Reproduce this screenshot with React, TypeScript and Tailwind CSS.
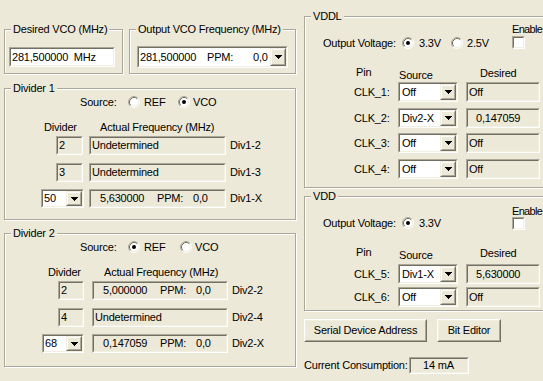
import React from "react";

type P = { className?: string; inner?: string; children?: React.ReactNode };

function Sunken({ className = "", inner = "", children }: P) {
  return (
    <div className={`shrink-0 border border-t-[#ACA899] border-l-[#ACA899] border-b-white border-r-white ${className}`}>
      <div className={`flex h-full w-full items-center overflow-hidden whitespace-pre border border-t-[#716F64] border-l-[#716F64] border-b-[#F1EFE2] border-r-[#F1EFE2] ${inner}`}>
        {children}
      </div>
    </div>
  );
}

function DropBtn() {
  return (
    <div className="h-full w-[16px] shrink-0 border border-t-[#F1EFE2] border-l-[#F1EFE2] border-b-[#716F64] border-r-[#716F64]">
      <div className="flex h-full w-full items-center justify-center border border-t-white border-l-white border-b-[#ACA899] border-r-[#ACA899] bg-[#ECE9D8]">
        <svg width="7" height="4" viewBox="0 0 7 4" shapeRendering="crispEdges">
          <path d="M0 0h7v1h-1v1h-1v1h-1v1h-1v-1h-1v-1h-1v-1h-1z" fill="#000" />
        </svg>
      </div>
    </div>
  );
}

function Combo({ className = "", inner = "pl-[2px]", children }: P) {
  return (
    <Sunken className={className} inner="bg-white">
      <div className={`min-w-0 flex-1 whitespace-pre ${inner}`}>{children}</div>
      <DropBtn />
    </Sunken>
  );
}

function Radio({ on }: { on?: boolean }) {
  return (
    <svg width="12" height="12" viewBox="0 0 12 12" className="shrink-0">
      <circle cx="6" cy="6" r="4.5" fill="#fff" />
      <path d="M2.11 9.89A5.5 5.5 0 0 1 9.89 2.11" fill="none" stroke="#ACA899" />
      <path d="M9.89 2.11A5.5 5.5 0 0 1 2.11 9.89" fill="none" stroke="#fff" />
      <path d="M2.82 9.18A4.5 4.5 0 0 1 9.18 2.82" fill="none" stroke="#716F64" />
      <path d="M9.18 2.82A4.5 4.5 0 0 1 2.82 9.18" fill="none" stroke="#F1EFE2" />
      {on && <circle cx="6" cy="6" r="2" fill="#000" />}
    </svg>
  );
}

function Button({ className = "", children }: P) {
  return (
    <div className={`h-[23px] shrink-0 border border-t-white border-l-white border-b-[#716F64] border-r-[#716F64] ${className}`}>
      <div className="flex h-full w-full items-center justify-center border border-t-[#F1EFE2] border-l-[#F1EFE2] border-b-[#ACA899] border-r-[#ACA899] bg-[#ECE9D8]">
        {children}
      </div>
    </div>
  );
}

function Group({ title, className = "", children }: { title: string; className?: string; children?: React.ReactNode }) {
  return (
    <fieldset className={`shrink-0 border border-[#ACA899] shadow-[inset_1px_1px_0_#fff,1px_1px_0_#fff] ${className}`}>
      <legend className="ml-[6px] bg-[#ECE9D8] px-[2px] leading-[13px]">{title}</legend>
      {children}
    </fieldset>
  );
}

function Freq({ value }: { value: string }) {
  return (
    <>
      <span className="ml-[8px] w-[57px] shrink-0">{value}</span>
      <span className="w-[36px] shrink-0">PPM:</span>
      <span>0,0</span>
    </>
  );
}

type Row = { small?: string; combo?: string; big: React.ReactNode; label: string };

function DividerGroup({
  title,
  refOn,
  className,
  rows,
  d2,
}: {
  title: string;
  refOn: boolean;
  className: string;
  rows: Row[];
  d2?: boolean;
}) {
  const mts = ["mt-[2px]", "mt-[8px]", "mt-[7px]"];
  return (
    <Group title={title} className={className}>
      <div className="flex h-[14px] items-center pl-[75px]">
        <span className="w-[48px]">Source:</span>
        <Radio on={refOn} />
        <span className={`ml-[4px] ${d2 ? "w-[36px]" : "w-[34px]"}`}>REF</span>
        <Radio on={!refOn} />
        <span className="ml-[3px]">VCO</span>
      </div>
      <div className={`mt-[12px] flex h-[13px] items-center ${d2 ? "pl-[43px]" : "pl-[39px]"}`}>
        <span className="w-[56px]">Divider</span>
        <span>Actual Frequency (MHz)</span>
      </div>
      {rows.map((r, i) => (
        <div key={i} className={`flex h-[19px] items-center ${mts[i]}`}>
          <div className="flex w-[79px] justify-end">
            {r.combo ? (
              <Combo className={`h-[19px] ${d2 ? "w-[42px]" : "w-[43px]"}`} inner="pl-[1px]">
                {r.combo}
              </Combo>
            ) : (
              <Sunken
                className={`h-[19px] ${d2 ? "w-[26px]" : "mr-[1px] w-[27px]"}`}
                inner="bg-[#ECE9D8] pl-[1px]"
              >
                {r.small}
              </Sunken>
            )}
          </div>
          <Sunken
            className={`h-[19px] ${d2 ? "ml-[8px] w-[136px]" : "ml-[5px] w-[137px]"}`}
            inner="bg-[#ECE9D8] pl-[1px]"
          >
            {r.big}
          </Sunken>
          <span className="ml-[4px]">{r.label}</span>
        </div>
      ))}
    </Group>
  );
}

type Clk = { name: string; src: string; desired: string; num?: boolean; mt: string };

function PowerGroup({
  title,
  className,
  two,
  enableMt,
  cbMt,
  headerH,
  rows,
}: {
  title: string;
  className: string;
  two?: boolean;
  enableMt: string;
  cbMt: string;
  headerH: string;
  rows: Clk[];
}) {
  return (
    <Group title={title} className={className}>
      <div className="flex">
        <div className="mt-[13px] flex h-[14px] w-[207px] shrink-0 items-center pl-[18px]">
          <span className="w-[79px] shrink-0">Output Voltage:</span>
          <Radio on />
          <span className="ml-[5px] w-[32px] shrink-0">3.3V</span>
          {two && (
            <>
              <Radio />
              <span className="ml-[4px]">2.5V</span>
            </>
          )}
        </div>
        <div className={`flex flex-col ${enableMt}`}>
          <span className="h-[13px] whitespace-nowrap tracking-[-0.7px]">Enable</span>
          <Sunken className={`h-[13px] w-[13px] ${cbMt}`} inner="bg-white" />
        </div>
      </div>
      <div className={`flex items-start pl-[51px] ${headerH}`}>
        <span className="mt-[16px] w-[43px]">Pin</span>
        <span className="mt-[19px] w-[81px]">Source</span>
        <span className="mt-[17px]">Desired</span>
      </div>
      {rows.map((r) => (
        <div key={r.name} className={`flex h-[20px] items-center ${r.mt}`}>
          <span className="w-[93px] shrink-0 pl-[49px]">{r.name}</span>
          <Combo className="h-[20px] w-[60px]">{r.src}</Combo>
          <Sunken
            className="ml-[8px] h-[20px] w-[74px]"
            inner={`bg-[#ECE9D8] ${r.num ? "pl-[8px]" : "pl-[1px]"}`}
          >
            {r.desired}
          </Sunken>
        </div>
      ))}
    </Group>
  );
}

export default function App() {
  return (
    <div className="flex h-[381px] w-[543px] overflow-hidden bg-[#ECE9D8] font-['Liberation_Sans',Arial,sans-serif] text-[11px] leading-[13px] tracking-[-0.2px] text-black">
      <div className="flex w-[300px] shrink-0 flex-col pl-[4px]">
        <div className="mt-[23px] flex gap-[6px]">
          <Group title="Desired VCO (MHz)" className="h-[51px] w-[119px]">
            <Sunken className="ml-[4px] mt-[11px] h-[20px] w-[106px]" inner="bg-white pl-[1px]">
              {"281,500000  MHz"}
            </Sunken>
          </Group>
          <Group title="Output VCO Frequency (MHz)" className="h-[51px] w-[167px]">
            <Combo className="ml-[7px] mt-[10px] h-[22px] w-[151px]" inner="pl-[1px] flex">
              <span className="w-[67px] shrink-0">281,500000</span>
              <span className="w-[46px] shrink-0">PPM:</span>
              <span>0,0</span>
            </Combo>
          </Group>
        </div>
        <DividerGroup
          title="Divider 1"
          refOn={false}
          className="mt-[8px] h-[138px] w-[292px]"
          rows={[
            { small: "2", big: "Undetermined", label: "Div1-2" },
            { small: "3", big: "Undetermined", label: "Div1-3" },
            { combo: "50", big: <Freq value="5,630000" />, label: "Div1-X" },
          ]}
        />
        <DividerGroup
          title="Divider 2"
          refOn
          d2
          className="mt-[7px] h-[140px] w-[292px]"
          rows={[
            { small: "2", big: <Freq value="5,000000" />, label: "Div2-2" },
            { small: "4", big: "Undetermined", label: "Div2-4" },
            { combo: "68", big: <Freq value="0,147059" />, label: "Div2-X" },
          ]}
        />
      </div>
      <div className="ml-[4px] flex w-[250px] shrink-0 flex-col">
        <PowerGroup
          title="VDDL"
          className="mt-[10px] h-[178px] w-[250px]"
          two
          enableMt="mt-0"
          cbMt="mt-0"
          headerH="h-[32px]"
          rows={[
            { name: "CLK_1:", src: "Off", desired: "Off", mt: "mt-0" },
            { name: "CLK_2:", src: "Div2-X", desired: "0,147059", num: true, mt: "mt-[6px]" },
            { name: "CLK_3:", src: "Off", desired: "Off", mt: "mt-[5px]" },
            { name: "CLK_4:", src: "Off", desired: "Off", mt: "mt-[6px]" },
          ]}
        />
        <PowerGroup
          title="VDD"
          className="mt-[2px] h-[121px] w-[250px]"
          enableMt="mt-[2px]"
          cbMt="-mt-[1px]"
          headerH="h-[34px]"
          rows={[
            { name: "CLK_5:", src: "Div1-X", desired: "5,630000", num: true, mt: "mt-0" },
            { name: "CLK_6:", src: "Off", desired: "Off", mt: "mt-[3px]" },
          ]}
        />
        <div className="mt-[8px] flex gap-[10px]">
          <Button className="w-[123px]">Serial Device Address</Button>
          <Button className="w-[64px]">Bit Editor</Button>
        </div>
        <div className="mt-[15px] flex items-center">
          <span className="w-[105px] shrink-0 whitespace-nowrap">Current Consumption:</span>
          <Sunken className="h-[17px] w-[60px]" inner="bg-[#ECE9D8] pl-[12px]">
            14 mA
          </Sunken>
        </div>
      </div>
    </div>
  );
}
